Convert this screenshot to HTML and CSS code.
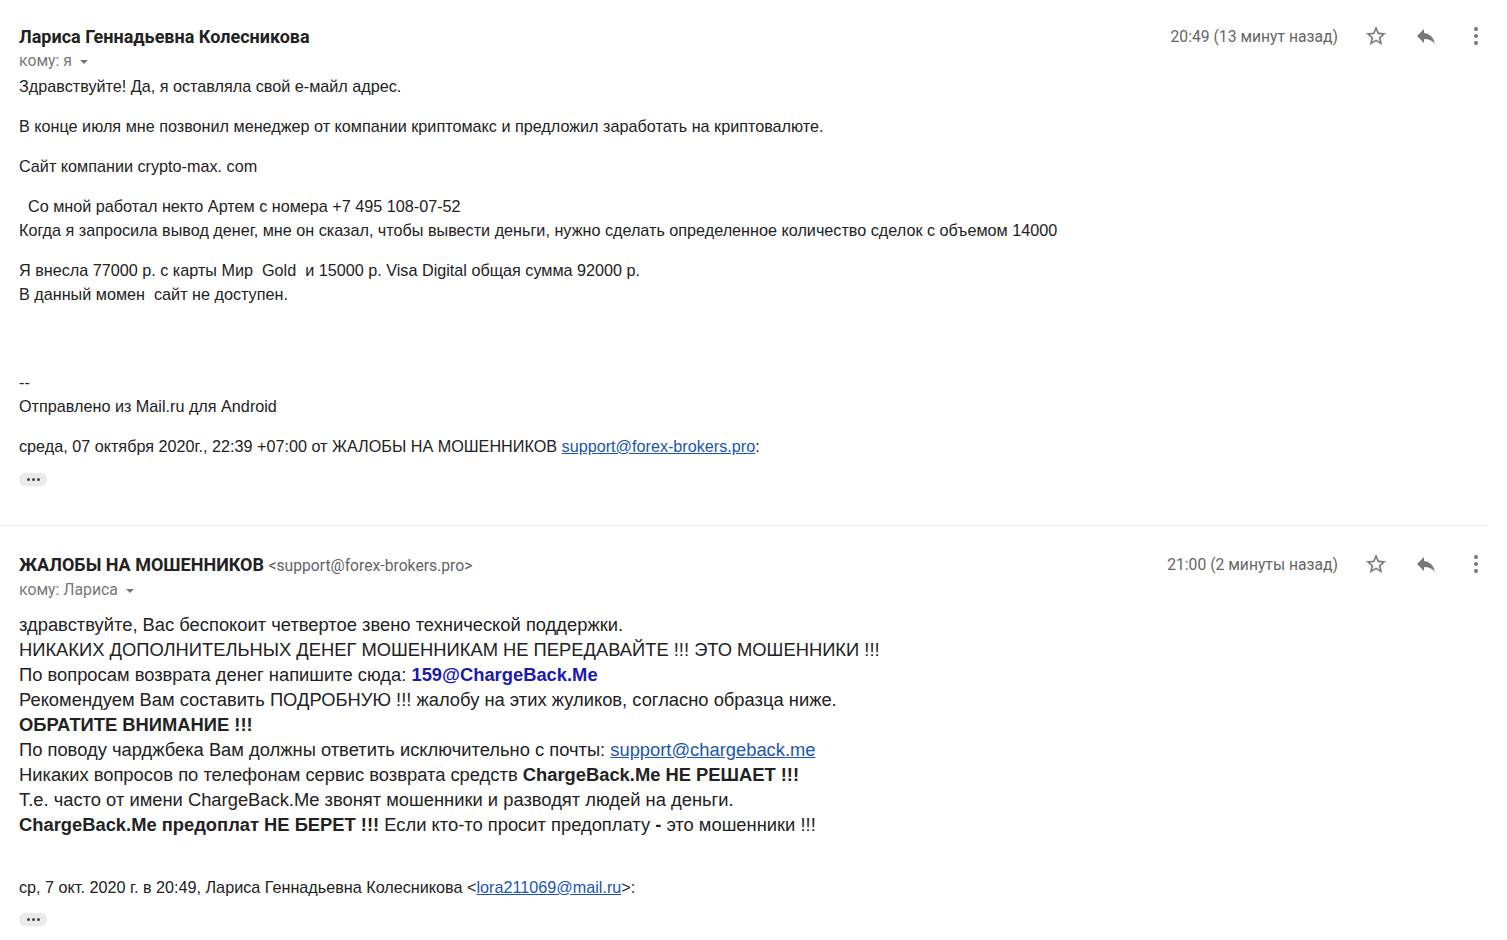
FILE: index.html
```html
<!DOCTYPE html>
<html lang="ru">
<head>
<meta charset="utf-8">
<title>Письмо</title>
<link rel="stylesheet" href="styles.css">
</head>
<body>
<div class="thread">
  <div class="msg msg-first">
    <div class="head">
      <div class="who">
        <div class="name">Лариса Геннадьевна Колесникова</div>
        <div class="to">кому: я <span class="caret"></span></div>
      </div>
      <div class="meta">
        <span class="time">20:49 (13 минут назад)</span>
        <span class="icon"><svg viewBox="0 0 24 24" width="24" height="24"><path d="M22 9.24l-7.19-.62L12 2 9.19 8.63 2 9.24l5.46 4.73L5.82 21 12 17.27 18.18 21l-1.63-7.03L22 9.24zM12 15.4l-3.76 2.27 1-4.28-3.320-2.88 4.38-.38L12 6.1l1.71 4.04 4.38.38-3.32 2.88 1 4.28L12 15.4z" fill="#777"/></svg></span>
        <span class="icon"><svg viewBox="0 0 24 24" width="24" height="24"><path d="M10 9V5l-7 7 7 7v-4.1c5 0 8.5 1.6 11 5.1-1-5-4-10-11-11z" fill="#777"/></svg></span>
        <span class="icon"><svg viewBox="0 0 24 24" width="24" height="24"><circle cx="12" cy="5" r="2" fill="#777"/><circle cx="12" cy="12" r="2" fill="#777"/><circle cx="12" cy="19" r="2" fill="#777"/></svg></span>
      </div>
    </div>
    <div class="body body-small">
      <p class="p1">Здравствуйте! Да, я оставляла свой е-майл адрес.</p>
      <p>В конце июля мне позвонил менеджер от компании криптомакс и предложил заработать на криптовалюте.</p>
      <p>Сайт компании crypto-max. com</p>
      <p>&nbsp; Со мной работал некто Артем с номера +7 495 108-07-52<br>Когда я запросила вывод денег, мне он сказал, чтобы вывести деньги, нужно сделать определенное количество сделок с объемом 14000</p>
      <p>Я внесла 77000 р. с карты Мир&nbsp; Gold&nbsp; и 15000 р. Visa Digital общая сумма 92000 р.<br>В данный момен&nbsp; сайт не доступен.</p>
      <p class="sig">--<br>Отправлено из Mail.ru для Android</p>
      <p class="quote">среда, 07 октября 2020г., 22:39 +07:00 от ЖАЛОБЫ НА МОШЕННИКОВ <a href="#">support@forex-brokers.pro</a>:</p>
      <div class="dots"><span></span><span></span><span></span></div>
    </div>
  </div>

  <div class="divider"></div>

  <div class="msg msg-second">
    <div class="head">
      <div class="who">
        <div class="name">ЖАЛОБЫ НА МОШЕННИКОВ <span class="addr">&lt;support@forex-brokers.pro&gt;</span></div>
        <div class="to">кому: Лариса <span class="caret"></span></div>
      </div>
      <div class="meta">
        <span class="time">21:00 (2 минуты назад)</span>
        <span class="icon"><svg viewBox="0 0 24 24" width="24" height="24"><path d="M22 9.24l-7.19-.62L12 2 9.19 8.63 2 9.24l5.46 4.73L5.82 21 12 17.27 18.18 21l-1.63-7.03L22 9.24zM12 15.4l-3.76 2.27 1-4.28-3.32-2.88 4.38-.38L12 6.1l1.71 4.04 4.38.38-3.32 2.88 1 4.28L12 15.4z" fill="#777"/></svg></span>
        <span class="icon"><svg viewBox="0 0 24 24" width="24" height="24"><path d="M10 9V5l-7 7 7 7v-4.1c5 0 8.5 1.6 11 5.1-1-5-4-10-11-11z" fill="#777"/></svg></span>
        <span class="icon"><svg viewBox="0 0 24 24" width="24" height="24"><circle cx="12" cy="5" r="2" fill="#777"/><circle cx="12" cy="12" r="2" fill="#777"/><circle cx="12" cy="19" r="2" fill="#777"/></svg></span>
      </div>
    </div>
    <div class="body body-large">
      <div class="lines">
        <div>здравствуйте, Вас беспокоит четвертое звено технической поддержки.</div>
        <div>НИКАКИХ ДОПОЛНИТЕЛЬНЫХ ДЕНЕГ МОШЕННИКАМ НЕ ПЕРЕДАВАЙТЕ !!! ЭТО МОШЕННИКИ !!!</div>
        <div>По вопросам возврата денег напишите сюда: <b class="blue">159@ChargeBack.Me</b></div>
        <div>Рекомендуем Вам составить ПОДРОБНУЮ !!! жалобу на этих жуликов, согласно образца ниже.</div>
        <div><b>ОБРАТИТЕ ВНИМАНИЕ !!!</b></div>
        <div>По поводу чарджбека Вам должны ответить исключительно с почты: <a href="#">support@chargeback.me</a></div>
        <div>Никаких вопросов по телефонам сервис возврата средств <b>ChargeBack.Me НЕ РЕШАЕТ !!!</b></div>
        <div>Т.е. часто от имени ChargeBack.Me звонят мошенники и разводят людей на деньги.</div>
        <div><b>ChargeBack.Me предоплат НЕ БЕРЕТ !!!</b> Если кто-то просит предоплату <b>-</b> это мошенники !!!</div>
      </div>
      <p class="quote">ср, 7 окт. 2020 г. в 20:49, Лариса Геннадьевна Колесникова &lt;<a href="#">lora211069@mail.ru</a>&gt;:</p>
      <div class="dots"><span></span><span></span><span></span></div>
    </div>
  </div>
</div>
</body>
</html>
```

FILE: styles.css
```css
html, body {
  margin: 0;
  padding: 0;
  background: #fff;
}
body {
  font-family: "Liberation Sans", Arial, sans-serif;
  color: #222;
  width: 1507px;
  height: 940px;
  overflow: hidden;
}
.thread {
  padding: 0 19px 0 19px;
}
.msg-first {
  padding-top: 26px;
}
.head {
  display: flex;
  justify-content: space-between;
  align-items: flex-start;
}
.name {
  font-family: Roboto, "Liberation Sans", sans-serif;
  font-weight: 700;
  font-size: 18px;
  line-height: 22px;
  color: #222;
}
.addr {
  font-weight: 400;
  font-size: 15.7px;
  color: #5f6368;
}
.to {
  font-family: Roboto, "Liberation Sans", sans-serif;
  font-size: 15.8px;
  line-height: 20px;
  color: #777;
  margin-top: 3px;
  display: flex;
  align-items: center;
}
.caret {
  display: inline-block;
  width: 0;
  height: 0;
  border-left: 4px solid transparent;
  border-right: 4px solid transparent;
  border-top: 4px solid #777;
  margin-left: 8px;
  margin-top: 1px;
}
.meta {
  display: flex;
  align-items: center;
  gap: 26px;
  margin-right: 0;
  margin-top: -2px;
}
.time {
  font-family: Roboto, "Liberation Sans", sans-serif;
  font-size: 15.7px;
  color: #666;
}
.icon {
  display: flex;
  width: 24px;
  height: 24px;
}
.body p {
  margin: 0;
}
.body-small {
  font-size: 16.2px;
  line-height: 24px;
  margin-top: 3px;
}
.body-small p + p {
  margin-top: 16px;
}
.body-small p.sig {
  margin-top: 64px;
}
.body-small .dots {
  margin-top: 15px;
}
a {
  color: #1a55b0;
  text-decoration: underline;
}
.dots {
  display: inline-flex;
  align-items: center;
  justify-content: center;
  gap: 2px;
  width: 28px;
  height: 13px;
  border-radius: 6px;
  background: #e8eaed;
}
.dots span {
  width: 3px;
  height: 3px;
  border-radius: 50%;
  background: #444;
}
.divider {
  height: 1px;
  background: #ececec;
  margin: 38px -19px 0 -19px;
  width: 1488px;
}
.msg-second {
  padding-top: 28px;
}
.body-large {
  margin-top: 12px;
}
.lines {
  font-size: 18.35px;
  line-height: 25px;
}
.blue {
  color: #1a1ab0;
}
.body-large .quote {
  font-size: 16.2px;
  line-height: 24px;
  margin-top: 38px;
}
.body-large .dots {
  margin-top: 14px;
}
```
